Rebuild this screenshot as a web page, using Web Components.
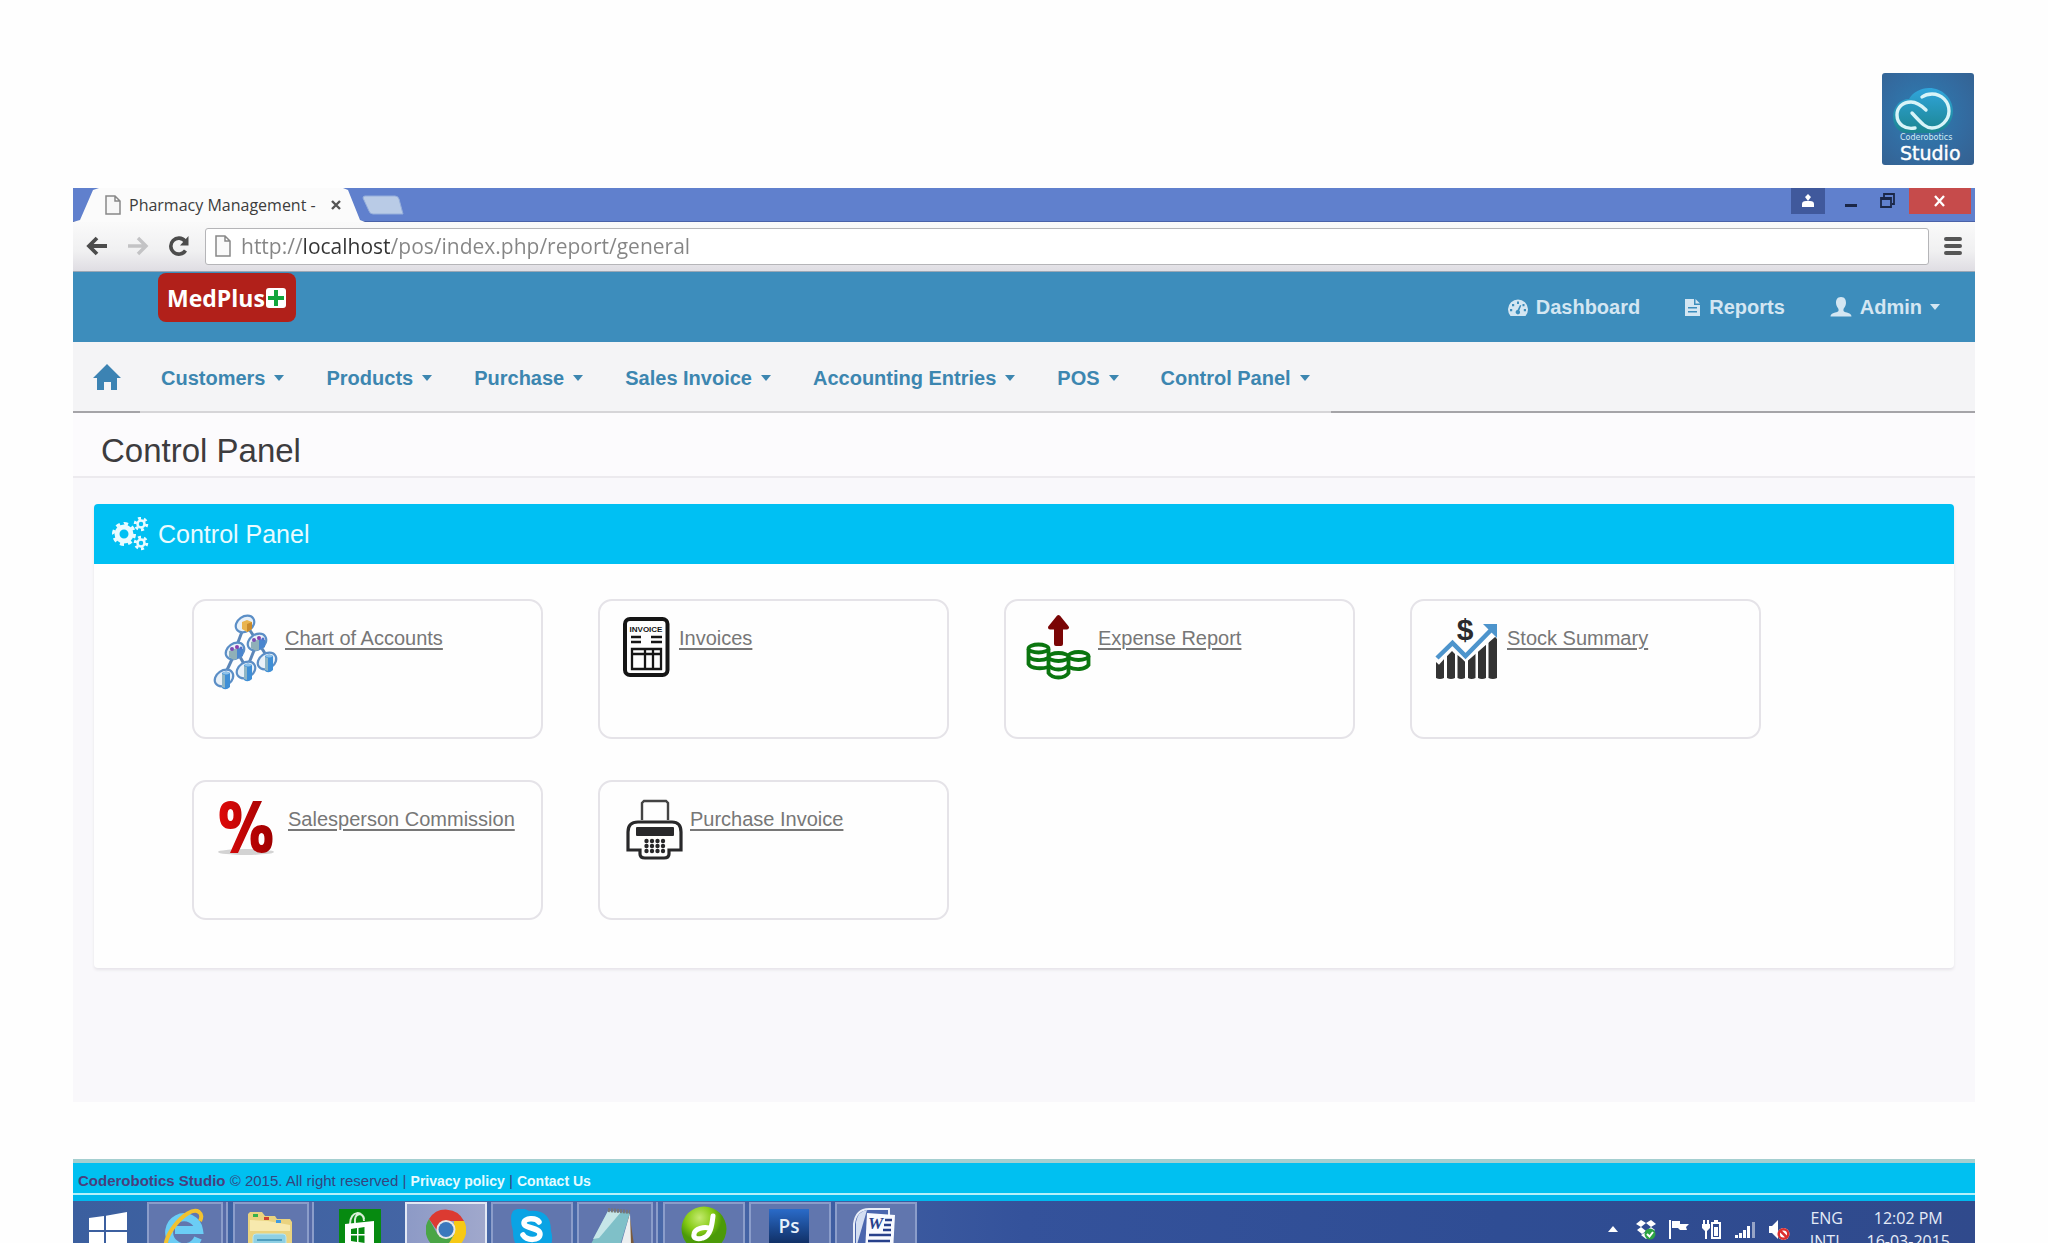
<!DOCTYPE html>
<html lang="en">
<head>
<meta charset="utf-8">
<title>Pharmacy Management</title>
<style>
  html, body { margin: 0; height: 100%; }
  body { overflow: hidden; background: #fefefe; font-family: "Liberation Sans", Arial, sans-serif; font-size: 20px; }
</style>
</head>
<body>
<desk-top></desk-top>
<script>
const define = (name, html) => {
  const t = document.createElement('template');
  t.innerHTML = html;
  customElements.define(name, class extends HTMLElement {
    constructor() {
      super();
      this.attachShadow({ mode: 'open' }).append(t.content.cloneNode(true));
    }
  });
};

/* Studio badge in the page's top right corner */
define('studio-logo', `
<style>
  :host { display: block; width: 92px; height: 92px; border-radius: 3px; overflow: hidden;
    background: radial-gradient(circle at 45% 45%, #2c7fb4, #336ba0 60%, #35608f); }
  svg { display: block; }
</style>
<svg width="92" height="92" viewBox="1882 73 92 92" role="img" aria-label="Coderobotics Studio">
  <defs><linearGradient id="c" x1="0" y1="0" x2="0" y2="1"><stop offset="0" stop-color="#30a5dc"/><stop offset="1" stop-color="#1c8590"/></linearGradient></defs>
  <path fill="url(#c)" d="M1907 133c-8 0-14-7-14-16 0-10 7-18 16-18 4-7 12-11 20-11 13 0 24 10 24 23s-10 22-22 22z"/>
  <g fill="none" stroke="#d8f4f8" stroke-width="3.400" stroke-linecap="round">
    <path d="M1915 128c-10 2-18-4-18-13 0-8 6-13 14-13 6 0 10 3 15 8"/>
    <path d="M1922 97c4-3 7-3 10-3 10 0 17 8 17 17s-8 17-17 17c-6 0-9-3-20-15"/>
  </g>
  <text x="1900" y="140" font-family="DejaVu Sans" font-size="8" fill="#d3ecf5">Coderobotics</text>
  <text x="1900" y="160" font-family="DejaVu Sans" font-size="19" fill="#fff" stroke="#fff" stroke-width=".4">Studio</text>
</svg>`);

/* Browser title strip with one tab */
define('tab-strip', `
<style>
  :host { display: flex; height: 34px; background: #6080cd; border-bottom: 1px solid #4a62a8; box-sizing: border-box; }
  .tab { display: flex; align-items: center; width: 292px; box-sizing: border-box; padding-left: 32px; margin-bottom: -1px;
    background: #fbfbfb; clip-path: polygon(0 100%, 7px 94%, 20px 6%, 26px 0, 270px 0, 275px 6%, 287px 94%, 100% 100%); }
  .tab span { font: 16px/20px "Open Sans", sans-serif; color: #3d3d3d; margin: 0 15px 0 8px; white-space: nowrap; }
  button { border: 0; padding: 0; background: none; display: flex; align-items: center; justify-content: center; box-sizing: border-box; }
  .new { align-self: center; margin-left: -3px; }
  .sp { flex: 1; }
  .win { height: 26px; }
  .user { width: 34px; background: #40599c; }
  .min, .max { width: 42px; }
  .min { padding-left: 10px; }
  .close { width: 62px; background: #c64b4b; margin-right: 4px; }
</style>
<div class="tab">
  <svg width="16" height="20" viewBox="0 0 16 20"><path d="M1 1h9l5 5v13H1zM10 1v5h5" fill="#f7f7f7" stroke="#888" stroke-width="1.500"/></svg>
  <span>Pharmacy Management -</span>
  <button aria-label="Close tab"><svg width="10" height="10" viewBox="0 0 10 10"><path d="M1 1l8 8M9 1l-8 8" stroke="#555" stroke-width="2.400"/></svg></button>
</div>
<button class="new" aria-label="New tab"><svg width="42" height="20" viewBox="0 0 42 20"><path d="M3 1h30q3 0 4 3l4 15H11q-3 0-4-3L1 3q0-2 2-2z" fill="#b9cbe6" stroke="#95aedb"/></svg></button>
<div class="sp"></div>
<button class="win user" aria-label="Profile"><svg width="12" height="14" viewBox="0 0 12 14"><path d="M6 0l3 3-3 4-3-4zM0 13v-3q0-3 4-3h4q4 0 4 3v3z" fill="#fff"/></svg></button>
<button class="win min" aria-label="Minimize"><svg width="12" height="18" viewBox="0 0 12 18"><path d="M0 12h12v3H0z" fill="#1b2747"/></svg></button>
<button class="win max" aria-label="Restore"><svg width="16" height="16" viewBox="0 0 16 16"><path d="M1 5h10v9H1zM1 6h10M4 4V1h10v10h-2" fill="none" stroke="#1b2747" stroke-width="1.800"/></svg></button>
<button class="win close" aria-label="Close"><svg width="12" height="12" viewBox="0 0 12 12"><path d="M1 1l9 10M10 1L1 11" stroke="#fff" stroke-width="2.300"/></svg></button>`);

define('address-bar', `
<style>
  :host { display: flex; align-items: center; height: 50px; box-sizing: border-box; padding: 0 13px 1px 13px;
    background: linear-gradient(#fafafa, #f0f0f1 60%, #dfdde3); border-bottom: 1px solid #9aa7b5; }
  button { border: 0; background: none; padding: 0; width: 41px; display: flex; }
  .re { width: 37px; }
  .box { flex: 1; min-width: 0; display: flex; align-items: center; height: 35px; border: 1px solid #b5b5b8; border-radius: 3px; background: #fff; padding-left: 9px; }
  input { flex: 1; min-width: 0; border: 0; outline: 0; padding: 0; margin-left: 10px; font: 21px/30px "Open Sans", sans-serif; color: #8a8a8a;
    background: linear-gradient(90deg, #858585 62px, #333 62px 150px, #858585 150px) text; -webkit-text-fill-color: transparent; }
  .menu { width: 18px; margin-left: 15px; }
</style>
<button aria-label="Back"><svg width="22" height="20" viewBox="0 0 22 20"><path d="M21 10H4M11 2l-8 8 8 8" fill="none" stroke="#4c4c4c" stroke-width="3.800"/></svg></button>
<button aria-label="Forward"><svg width="22" height="20" viewBox="0 0 22 20"><path d="M1 10h17M11 2l8 8-8 8" fill="none" stroke="#c3c3c5" stroke-width="3.400"/></svg></button>
<button class="re" aria-label="Reload"><svg width="22" height="22" viewBox="0 0 22 22"><path d="M17.500 15.500A8 8 0 1 1 17 6" fill="none" stroke="#4c4c4c" stroke-width="3.600"/><path d="M20.500 1v9.500H12z" fill="#4c4c4c"/></svg></button>
<div class="box">
  <svg width="16" height="22" viewBox="0 0 16 22"><path d="M1 1h9l5 5v15H1zM10 1v5h5" fill="#fafafa" stroke="#888" stroke-width="1.500"/></svg>
  <input aria-label="Address" value="http://localhost/pos/index.php/report/general">
</div>
<button class="menu" aria-label="Menu"><svg width="18" height="20" viewBox="0 0 18 20"><path d="M2 3h14M2 10h14M2 17h14" stroke="#555" stroke-width="4" stroke-linecap="round"/></svg></button>`);

define('app-header', `
<style>
  :host { display: flex; height: 70px; background: #3d8dbc; padding: 0 35px 0 85px; align-items: flex-start; }
  .brand { display: flex; align-items: center; gap: 1px; box-sizing: border-box; height: 49px; margin: 1px auto 0 0; padding: 0 10px 0 9px;
    border-radius: 8px; background: #b1201a; color: #fff; font: bold 23px/30px "Open Sans", sans-serif; text-decoration: none; }
  nav { display: flex; align-self: stretch; align-items: center; gap: 45px; }
  nav a { display: flex; align-items: center; gap: 8px; color: #d4e6f2; font-weight: bold; line-height: 24px; text-decoration: none; }
  svg { fill: currentColor; }
  i { border: 5px solid transparent; border-top: 6px solid; border-bottom: 0; }
</style>
<a class="brand" href="#">MedPlus<svg width="20" height="20" viewBox="0 0 20 20"><rect width="20" height="20" rx="3"/><path fill="#12a53c" d="M8 2h4v6h6v4h-6v6H8v-6H2V8h6z"/></svg></a>
<nav>
  <a href="#"><svg width="20" height="17" viewBox="0 0 20 17"><path fill-rule="evenodd" d="M2.500 17A10 10 0 1 1 17.500 17zM9 2.500v2.500h2V2.500zM4 5v2.200h2.200V5zM2 10v2.200h2.200V10zM14.500 5v2.200h2V5zM15.800 10v2.200H18V10zM12 6L9.500 11a2.200 2.200 0 1 0 1.800.5L13.300 6.500z"/></svg>Dashboard</a>
  <a href="#"><svg width="16" height="17" viewBox="0 0 16 17"><path fill-rule="evenodd" d="M0 0h9v6h6v11H0zM3 8v1.500h9V8zM3 12v1.500h9V12z"/><path d="M10.500 0L15 4.500h-4.500z"/></svg>Reports</a>
  <a href="#"><svg width="22" height="20" viewBox="0 0 22 20"><path d="M11 0c4 0 5 3 5 6s-2 5-2.500 6v2c2 2 8 1.500 8 5.500H.5c0-4 6-3.500 8-5.500v-2C8 11 6 9 6 6s1-6 5-6z"/></svg>Admin<i></i></a>
</nav>`);

define('nav-menu', `
<style>
  :host { flex: none; }
  button { display: flex; align-items: center; gap: 9px; height: 100%; margin: 0; border: 0; padding: 2px 21px 0; background: none;
    font: bold 20px/24px "Liberation Sans", Arial, sans-serif; color: #3c86b0; white-space: nowrap; }
  i { border: 5px solid transparent; border-top: 6px solid; border-bottom: 0; }
</style>
<button aria-haspopup="true"><slot></slot><i></i></button>`);

define('main-nav', `
<style>
  :host { display: flex; height: 71px; background: #f4f4f6; }
  .home, .rest { border-bottom: 2px solid #a5a4a8; }
  .home { width: 67px; display: flex; align-items: center; justify-content: center; }
  .menus { display: flex; border-bottom: 2px solid #d6d5d8; }
  .rest { flex: 1; }
</style>
<a class="home" href="#" aria-label="Home"><svg width="28" height="26" viewBox="0 0 28 26"><path fill="#3c83b3" d="M14 0l14 14h-4v12h-6v-8h-7v8H4V14H0z"/></svg></a>
<div class="menus"><nav-menu>Customers</nav-menu><nav-menu>Products</nav-menu><nav-menu>Purchase</nav-menu><nav-menu>Sales Invoice</nav-menu><nav-menu>Accounting Entries</nav-menu><nav-menu>POS</nav-menu><nav-menu>Control Panel</nav-menu></div>
<div class="rest"></div>`);

define('report-card', `
<style>
  :host { display: flex; align-items: flex-start; box-sizing: border-box; height: 140px; padding: 11px 18px; border: 2px solid #e5e3e8; border-radius: 14px; background: #fefefe; }
  a { margin-top: 14px; font-size: 20px; line-height: 24px; color: #777; white-space: nowrap; text-decoration: underline; text-underline-offset: 3px; }
</style>
<slot name="icon"></slot><a href="#"><slot></slot></a>`);

const node = (x, y, body) => `<g transform="translate(${x} ${y})"><ellipse rx="10" ry="7.500" transform="rotate(-35)" fill="#e9f1f8" stroke="#5b8ec6" stroke-width="2.200"/>${body}</g>`;
const cyl = '<path d="M-2-5q4-3 8 0v14q-4 4-8 1z" fill="#3f8fd6"/><path d="M-2-5q4-3 8 0-4 3-8 0z" fill="#8fc3ea"/><path d="M1-3v13l-3-1V-4z" fill="#8fb6c6"/>';
const group = '<path d="M-6 0l8-3 6 1v7l-9 4-5-3z" fill="#8fb0b8"/><path d="M2-3l6 1v7l-6 3z" fill="#4a86cf"/><circle cx="-3" cy="-2" r="2" fill="#7b4bb3"/><circle cx="2" cy="-4" r="2" fill="#8a3fae"/><circle cx="6" cy="-3" r="1.500" fill="#5270c9"/>';
const gold = '<path d="M-3-2l5-2 5 2v7l-5 3-5-3z" fill="#e9b44e"/><path d="M2 0l5-2v7l-5 3z" fill="#c98a2b"/>';
const gear = (x, y, r, w, teeth) => `<g transform="translate(${x} ${y})" fill="none" stroke="#e9fbff"><circle r="${r}" stroke-width="${w}"/><circle r="${r + w / 2 + 1}" stroke-width="3" pathLength="${teeth * 2}" stroke-dasharray="1 1"/></g>`;
let dots = '';
for (let r = 0; r < 3; r++) for (let c = 0; c < 4; c++) dots += `<circle cx="${646.5 + c * 5.5}" cy="${840 + r * 5}" r="2.200"/>`;

define('control-panel', `
<style>
  :host { display: block; border-radius: 4px; background: #fefefe; box-shadow: 0 2px 3px #e6e4e9; overflow: hidden; }
  header { display: flex; align-items: center; gap: 9px; height: 60px; padding-left: 17px; background: #00c0f3; }
  h2 { margin: 0; font-weight: normal; font-size: 25px; line-height: 30px; color: #e9fbff; }
  .cards { display: grid; grid-template-columns: repeat(auto-fill, 351px); gap: 41px 55px; padding: 35px 98px 48px; }
</style>
<header>
  <svg width="38" height="34" viewBox="110 517 38 34">${gear(123, 534, 7, 5, 8)}${gear(140, 524, 3.5, 2.5, 6)}${gear(140, 543, 3.5, 2.5, 6)}</svg>
  <h2>Control Panel</h2>
</header>
<div class="cards">
  <report-card><svg slot="icon" width="73" height="90" viewBox="212 611 73 90">
    <path d="M243 628l-6 16M249 628l6 9M234 654l-7 15M239 654l5 9M255 647l-6 15M261 646l5 8" stroke="#5b86b8" stroke-width="3"/>
    ${node(245, 623, gold)}${node(257, 641, group)}${node(235, 650, group)}${node(267, 660, cyl)}${node(246, 669, cyl)}${node(224, 677, cyl)}
  </svg>Chart of Accounts</report-card>
  <report-card><svg slot="icon" width="61" height="90" viewBox="618 611 61 90" fill="none" stroke="#151515">
    <rect x="625" y="618" width="42.500" height="56" rx="5" stroke-width="4"/>
    <text x="646" y="631" text-anchor="middle" font-family="Liberation Sans" font-weight="bold" font-size="8" fill="#151515" stroke="none">INVOICE</text>
    <path d="M631 636h10M631 641h10M651 636h11M651 641h11" stroke-width="2.500"/>
    <path d="M632 648h29v20h-29zM632 653h29M645 648v20M653 648v20" stroke-width="2.300"/>
  </svg>Invoices</report-card>
  <report-card><svg slot="icon" width="74" height="90" viewBox="1024 611 74 90">
    <path d="M1058.500 616l8.500 10.500h-6V643h-5V626.500h-6z" fill="#7a0505" stroke="#7a0505" stroke-width="4" stroke-linejoin="round"/>
    <g fill="none" stroke="#0b750f" stroke-width="3.800">
      <ellipse cx="1038.500" cy="647.500" rx="10" ry="4"/><path d="M1028.500 648v15c3 5 13 5 20 3M1028.500 655c3 5 14 5 20 2M1048.500 648v8"/>
      <ellipse cx="1058.500" cy="656" rx="10" ry="4"/><path d="M1048.500 656v16c4 6 16 6 20 0v-16M1048.500 664c4 6 16 6 20 0"/>
      <ellipse cx="1078.500" cy="655" rx="10" ry="4"/><path d="M1088.500 655v9c-4 5-13 5-20 2"/>
    </g>
  </svg>Expense Report</report-card>
  <report-card><svg slot="icon" width="77" height="90" viewBox="1430 611 77 90">
    <path fill="#333" d="M1436 661l8-5v21q-4 2-8 0zM1447 655l5-5 3 3v24q-4 2-8 0zM1457.500 654l7.500 6v17q-4 2-7.500 0zM1468 658l7.500-8v27q-4 2-7.500 0zM1478 647l8-8v38q-4 2-8 0zM1488.500 636l4-3 4.500 5v39q-4 2-8.500 0z"/>
    <path fill="none" stroke="#fefefe" stroke-width="8" d="M1436 661l17-19 13 14 31-27"/>
    <path fill="none" stroke="#4d94cc" stroke-width="4.500" d="M1437 657l15.500-15 13 13L1491 629"/>
    <path fill="#4d94cc" d="M1483 623h14v14z"/>
    <text x="1465" y="639" text-anchor="middle" font-family="Liberation Sans" font-weight="bold" font-size="30" fill="#2b2b2d">$</text>
  </svg>Stock Summary</report-card>
  <report-card><svg slot="icon" width="76" height="90" viewBox="212 792 76 90">
    <defs><linearGradient id="r"><stop offset="0" stop-color="#dd0a0a"/><stop offset="1" stop-color="#a00000"/></linearGradient></defs>
    <ellipse cx="246" cy="851" rx="28" ry="3" fill="#d3d3d3"/>
    <path fill="url(#r)" fill-rule="evenodd" d="M253 800h9l-24 52h-8zM230.500 800q11 0 11 14t-11 14-11-14 11-14zM230.500 808q-3 0-3 6t3 6 3-6-3-6zM261.500 824q11 0 11 14t-11 14-11-14 11-14zM261.500 832q-3 0-3 6t3 6 3-6-3-6z"/>
  </svg>Salesperson Commission</report-card>
  <report-card><svg slot="icon" width="72" height="90" viewBox="618 792 72 90">
    <path d="M642 819v-17l2-2h22l2 2v17" fill="none" stroke="#444" stroke-width="2.400"/>
    <path d="M638 821h34q9 0 9 10v18h-12v4q0 4-5 4h-19q-5 0-5-4v-4h-12v-18q0-10 10-10z" fill="none" stroke="#28282a" stroke-width="3.200"/>
    <rect x="636" y="826" width="38" height="9" rx="1" fill="#28282a"/><g fill="#28282a">${dots}</g>
  </svg>Purchase Invoice</report-card>
</div>`);

define('page-body', `
<style>
  h1 { margin: 0; box-sizing: border-box; height: 65px; padding: 18px 0 0 28px; font-weight: normal; font-size: 33px; line-height: 40px; color: #3d3c3e;
    background: #fcfbfd; border-bottom: 2px solid #eceaee; }
  :host { display: block; background: #f9f8fb; }
  main { padding: 26px 21px 134px; }
</style>
<h1>Control Panel</h1>
<main><control-panel></control-panel></main>`);

define('site-footer', `
<style>
  :host { display: block; margin-top: 57px; border-top: 4px solid #a5cfd0; background: #00c0f1; border-bottom: 6px solid #00b9ee; }
  p { margin: 0; height: 32px; box-sizing: border-box; padding: 8px 5px 0; font-size: 15px; line-height: 19px; color: #34457f; border-bottom: 2px solid #b5f0fa; white-space: nowrap; }
  b { color: #493f7d; }
  a { color: #e6fbff; font-weight: bold; font-size: 14px; text-decoration: none; }
</style>
<p><b>Coderobotics Studio</b> © 2015. All right reserved | <a href="#">Privacy policy</a> | <a href="#">Contact Us</a></p>`);

define('task-button', `
<style>
  :host { display: block; width: 82px; height: 52px; margin-right: 4px; }
  button { display: block; width: 82px; height: 52px; padding: 4px 0 0; border: 2px solid transparent; background: none; box-sizing: border-box; }
  :host([open]) button { background: #6176ae; border-color: #8b9dca; }
  :host([active]) button { background: linear-gradient(90deg, #8d9ac6, #a0a8cc); border-color: #e3e8f4; }
  :host([stack]) button { width: 76px; box-shadow: 3px 0 #566ba8, 5px 0 #8b9dca; }
</style>
<button><slot></slot></button>`);

define('task-bar', `
<style>
  :host { display: flex; height: 54px; padding-top: 1px; box-sizing: border-box; background: linear-gradient(90deg, #3b5f9f, #4a69a8 30%, #34529b 50%, #2f4d94 75%, #304a8c); }
  svg { display: block; }
  .tray { margin-left: auto; display: flex; gap: 13px; padding-top: 17px; }
  .lang, time { font: 16px/23px "Open Sans", sans-serif; color: #e5ebf7; text-align: center; padding-top: 5px; white-space: nowrap; }
  .lang { margin: 0 23px 0 20px; }
  time { margin-right: 25px; }
  .start { margin-right: 5px; width: 69px; border: 0; background: none; padding: 8px 0 0 16px; height: 52px; box-sizing: border-box; }
</style>
<button class="start" aria-label="Start"><svg width="38" height="40" viewBox="0 0 38 40"><path fill="#fff" d="M0 6l15-2v14H0zM17 3.700L38 0v18H17zM0 20h15v14L0 32zM17 20h21v19l-21-4z"/></svg></button>
<task-button open stack aria-label="Internet Explorer"><svg width="44" height="44" viewBox="0 0 44 44" style="margin-left:12px">
  <path fill="none" stroke="#6bcdf5" stroke-width="8" d="M37 30A15 15 0 1 1 38 22H14"/><path fill="none" stroke="#f2c230" stroke-width="4" d="M7 44C-4 34 26-4 38 4c4 3 2 7 1 9"/></svg></task-button>
<task-button open stack aria-label="File Explorer"><svg width="46" height="44" viewBox="0 0 46 44" style="margin-left:12px">
  <path fill="#ead37f" d="M1 44V6l2-2h12l3 4h10l2 3h13l2 3v30z"/><path fill="#f7e9ae" d="M3 12l18 1 22 4v6H3z"/><path d="M6 6h5v3H6z" fill="#35b04a"/><path d="M17 9h5v3h-5z" fill="#d0402f"/><path d="M29 12h5v3h-5z" fill="#3f9be0"/><rect x="6" y="26" width="33" height="18" rx="3" fill="#8fd0e4" stroke="#b9e6f0"/><path d="M10 32h25" stroke="#4f9fc0" stroke-width="2"/></svg></task-button>
<task-button aria-label="Store"><svg width="42" height="42" viewBox="0 0 42 42" style="margin-left:18px">
  <path fill="#068a10" d="M0 0h42v42H0z"/><path fill="none" stroke="#d9f0d9" stroke-width="2" d="M11 15c0-14 14-14 14-3M16 14c-1-12 9-10 9-4"/><path fill="#fff" d="M6 15l29-3v29l-29-5z"/><path fill="#068a10" d="M12 20l6-1v6h-6zM19.500 19l6-1v7h-6zM12 26.500h6V33l-6-1zM19.500 26.500h6V34l-6-1z"/></svg></task-button>
<task-button open active aria-label="Chrome"><svg width="40" height="44" viewBox="0 0 40 44" style="margin-left:19px">
  <path fill="#dc3a31" d="M3 11A20 20 0 0 1 38 13H20L13 25z"/><path fill="#4aa546" d="M3 11A20 20 0 0 0 19 42L28 27H12z"/><path fill="#f6c915" d="M38 13A20 20 0 0 1 19 42l9-15 0-14z"/><circle cx="20" cy="21.500" r="9.500" fill="#e8e8e8"/><circle cx="20" cy="21.500" r="7.500" fill="#3a78bd"/></svg></task-button>
<task-button open aria-label="Skype"><svg width="42" height="42" viewBox="0 0 42 42" style="margin-left:18px">
  <path fill="#0aa3e4" d="M2 2Q10-3 18 2 40 0 40 22q3 10-2 18H12Q2 38 2 22-2 8 2 2z"/><path fill="none" stroke="#fff" stroke-width="5.500" stroke-linecap="round" d="M28 13c-3-5-15-4-15 1 0 6 16 4 16 11 0 7-13 7-17 1"/></svg></task-button>
<task-button open stack aria-label="Notepad"><svg width="44" height="44" viewBox="0 0 44 44" style="margin-left:12px">
  <path fill="#7b5b3c" d="M38 3l5 34-6 7h-4z"/><path fill="#eceff0" d="M39 5l1 33-6 6h-6z"/><path fill="#7fc0c8" d="M17 3l22 2-12 39-27-8z"/><path fill="#c6e6e8" d="M17 3l13 1L8 30l-6 1z"/><path d="M17 2l22 2" stroke="#777" stroke-width="4" stroke-dasharray="2 1"/></svg></task-button>
<task-button open aria-label="Downloader"><svg width="46" height="46" viewBox="0 0 46 46" style="margin-left:16px;margin-top:-2px">
  <defs><radialGradient id="g" cx=".4" cy=".25"><stop offset="0" stop-color="#c5ea70"/><stop offset=".6" stop-color="#86cb15"/><stop offset="1" stop-color="#4b9a08"/></radialGradient></defs><circle cx="23" cy="23" r="22.500" fill="url(#g)"/><path fill="none" stroke="#fff" stroke-width="5" stroke-linecap="round" d="M32 10c-1 8-2 20-10 22-6 2-10 0-9-4 1-6 10-7 15-6"/></svg></task-button>
<task-button open aria-label="Photoshop"><svg width="40" height="42" viewBox="0 0 40 42" style="margin-left:18px">
  <defs><linearGradient id="p" x1="0" y1="0" x2="0" y2="1"><stop offset="0" stop-color="#2a6bc9"/><stop offset="1" stop-color="#0b2350"/></linearGradient></defs><path fill="url(#p)" d="M0 0h40v42H0z"/><text x="20" y="24" text-anchor="middle" font-family="Open Sans" font-weight="600" font-size="19" fill="#e6f1fb">Ps</text></svg></task-button>
<task-button open aria-label="Word"><svg width="44" height="44" viewBox="0 0 44 44" style="margin-left:16px">
  <path fill="#4a66ae" stroke="#e9eef8" stroke-width="2" d="M1 44V16Q3 1 16 1h20v43z"/><path fill="#d3def2" d="M14 2q-9 1-11 12v26z"/><path fill="#f8faff" d="M14 5l28 2-2 37H12z"/><text x="15" y="21" font-family="Liberation Serif" font-weight="bold" font-style="italic" font-size="17" fill="#27408b">W</text><path d="M32 12h7M31 17h7M30 22h8M16 27h22M15 33h22M15 38h21" stroke="#27408b" stroke-width="2.600"/></svg></task-button>
<div class="tray">
  <svg width="20" height="24" viewBox="0 0 20 24"><path fill="#fff" d="M5 13l5-6 5 6z"/></svg>
  <svg width="20" height="24" viewBox="0 0 20 24"><path fill="#fff" d="M5 1l5 3-5 4-5-3zM15 1l5 4-5 3-5-4zM5 8l5 4-4 3-5-4zM15 8l4 3-5 4-4-3zM5 16l5-3 5 3-5 4z"/><circle cx="14" cy="15" r="5.500" fill="#2da343"/><path d="M11 15l2.500 2.500L17 13" stroke="#fff" stroke-width="2" fill="none"/></svg>
  <svg width="20" height="24" viewBox="0 0 20 24"><path fill="#fff" d="M0 1h2v19H0zM3 2h8v3h9l-3 3 1 3h-7l-2-2H3z"/></svg>
  <svg width="20" height="24" viewBox="0 0 20 24"><path fill="none" stroke="#fff" stroke-width="2" d="M10 4h8v15h-8zM12 2h4M4 11v9M2 1v5M6 1v5"/><path fill="#fff" d="M0 5h8v4l-3 3H3L0 9zM12 8h4v9h-4z"/></svg>
  <svg width="21" height="24" viewBox="0 0 21 24"><path fill="#fff" d="M0 16h3v3H0zM4 14h3v5H4zM8 11h3v8H8zM12 7h3v12h-3z"/><path fill="#97a4c6" d="M17 3h3v16h-3z"/></svg>
  <svg width="21" height="24" viewBox="0 0 21 24"><path fill="#fff" d="M0 7h3l6-6v19l-6-6H0z"/><circle cx="14.500" cy="15" r="6" fill="#fff"/><circle cx="14.500" cy="15" r="4.800" fill="none" stroke="#dc2f2f" stroke-width="2.500"/><path d="M11 11.500l7 7" stroke="#dc2f2f" stroke-width="2.500"/></svg>
</div>
<div class="lang">ENG<br>INTL</div>
<time>12:02 PM<br>16-03-2015</time>`);

define('desk-top', `
<style>
  :host { display: block; padding: 73px 73px 0; }
  studio-logo { margin: 0 1px 23px auto; }
</style>
<studio-logo></studio-logo>
<tab-strip></tab-strip>
<address-bar></address-bar>
<app-header></app-header>
<main-nav></main-nav>
<page-body></page-body>
<site-footer></site-footer>
<task-bar></task-bar>`);
</script>
</body>
</html>
